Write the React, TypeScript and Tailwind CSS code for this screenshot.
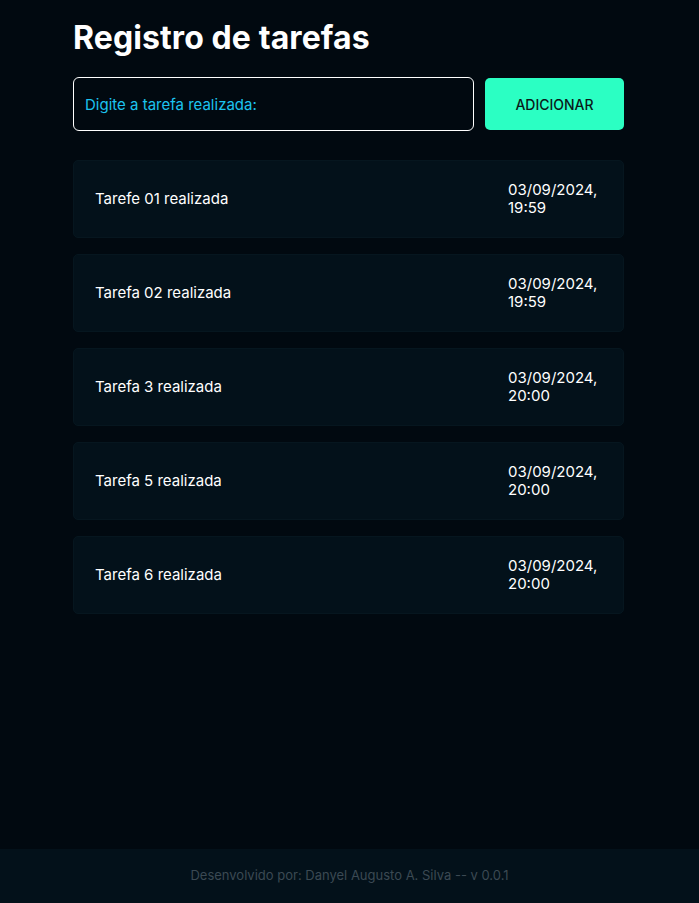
import { useState } from "react";

const tasks = [
  { id: 1, title: "Tarefe 01 realizada", date: "03/09/2024,", time: "19:59" },
  { id: 2, title: "Tarefa 02 realizada", date: "03/09/2024,", time: "19:59" },
  { id: 3, title: "Tarefa 3 realizada", date: "03/09/2024,", time: "20:00" },
  { id: 5, title: "Tarefa 5 realizada", date: "03/09/2024,", time: "20:00" },
  { id: 6, title: "Tarefa 6 realizada", date: "03/09/2024,", time: "20:00" },
];

export default function App() {
  const [value, setValue] = useState("");

  return (
    <div className="min-h-[903px] flex flex-col bg-[#010910] font-['Inter',sans-serif] text-white">
      <main className="flex-1 w-[551px] ml-[73px] pt-[18px]">
        <h1 className="text-[32px] font-bold leading-[40px] tracking-[0.1px]">
          Registro de tarefas
        </h1>

        <div className="flex gap-[11px] mt-[19px]">
          <input
            value={value}
            onChange={(e) => setValue(e.target.value)}
            placeholder="Digite a tarefa realizada:"
            className="flex-1 h-[54px] rounded-[6px] border border-white bg-transparent px-[11px] text-[15px] text-[#1cc3ef] placeholder:text-[#1cc3ef] outline-none"
          />
          <button className="w-[139px] h-[52px] mt-px rounded-[5px] bg-[#2bffc3] text-[#0a1a1a] text-[14px] font-medium">
            ADICIONAR
          </button>
        </div>

        {/* Task list */}
        <ul className="mt-[29px] flex flex-col gap-4">
          {tasks.map((t) => (
            <li
              key={t.id}
              className="h-[78px] flex items-center justify-between pl-[21px] pr-[21px] rounded-[5px] bg-[#03111a] border border-[#06161f]"
            >
              <span className="text-[15px]">{t.title}</span>
              <span className="w-[94px] text-[15px] leading-[18px]">
                {t.date}
                <br />
                {t.time}
              </span>
            </li>
          ))}
        </ul>
      </main>

      <footer className="h-[54px] flex items-center justify-center bg-[#03111a] text-[13px] text-[#3b4953]">
        Desenvolvido por: Danyel Augusto A. Silva -- v 0.0.1
      </footer>
    </div>
  );
}
